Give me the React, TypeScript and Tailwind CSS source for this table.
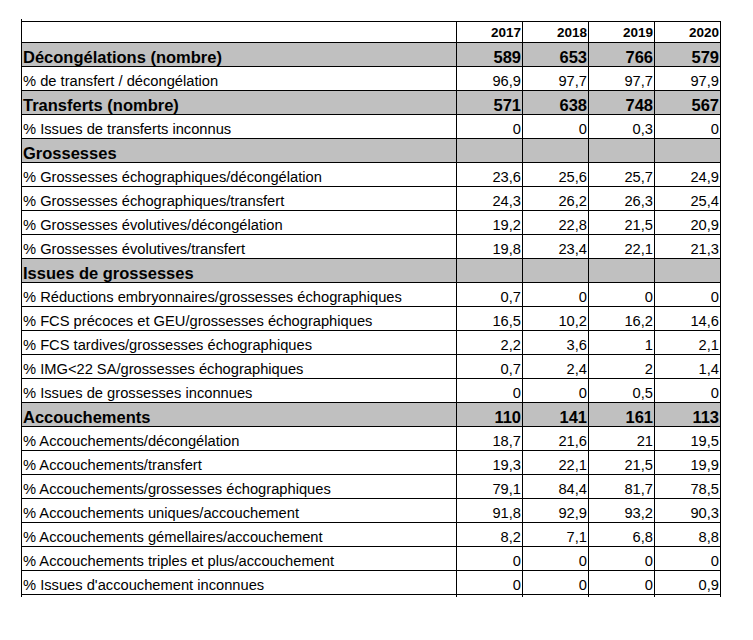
import React from "react";

type Row = { label: string; values: string[]; kind: "group" | "pct" };

const rows: Row[] = [
  { label: "Décongélations (nombre)", values: ["589", "653", "766", "579"], kind: "group" },
  { label: "% de transfert / décongélation", values: ["96,9", "97,7", "97,7", "97,9"], kind: "pct" },
  { label: "Transferts (nombre)", values: ["571", "638", "748", "567"], kind: "group" },
  { label: "% Issues de transferts inconnus", values: ["0", "0", "0,3", "0"], kind: "pct" },
  { label: "Grossesses", values: ["", "", "", ""], kind: "group" },
  { label: "% Grossesses échographiques/décongélation", values: ["23,6", "25,6", "25,7", "24,9"], kind: "pct" },
  { label: "% Grossesses échographiques/transfert", values: ["24,3", "26,2", "26,3", "25,4"], kind: "pct" },
  { label: "% Grossesses évolutives/décongélation", values: ["19,2", "22,8", "21,5", "20,9"], kind: "pct" },
  { label: "% Grossesses évolutives/transfert", values: ["19,8", "23,4", "22,1", "21,3"], kind: "pct" },
  { label: "Issues de grossesses", values: ["", "", "", ""], kind: "group" },
  { label: "% Réductions embryonnaires/grossesses échographiques", values: ["0,7", "0", "0", "0"], kind: "pct" },
  { label: "% FCS précoces et GEU/grossesses échographiques", values: ["16,5", "10,2", "16,2", "14,6"], kind: "pct" },
  { label: "% FCS tardives/grossesses échographiques", values: ["2,2", "3,6", "1", "2,1"], kind: "pct" },
  { label: "% IMG<22 SA/grossesses échographiques", values: ["0,7", "2,4", "2", "1,4"], kind: "pct" },
  { label: "% Issues de grossesses inconnues", values: ["0", "0", "0,5", "0"], kind: "pct" },
  { label: "Accouchements", values: ["110", "141", "161", "113"], kind: "group" },
  { label: "% Accouchements/décongélation", values: ["18,7", "21,6", "21", "19,5"], kind: "pct" },
  { label: "% Accouchements/transfert", values: ["19,3", "22,1", "21,5", "19,9"], kind: "pct" },
  { label: "% Accouchements/grossesses échographiques", values: ["79,1", "84,4", "81,7", "78,5"], kind: "pct" },
  { label: "% Accouchements uniques/accouchement", values: ["91,8", "92,9", "93,2", "90,3"], kind: "pct" },
  { label: "% Accouchements gémellaires/accouchement", values: ["8,2", "7,1", "6,8", "8,8"], kind: "pct" },
  { label: "% Accouchements triples et plus/accouchement", values: ["0", "0", "0", "0"], kind: "pct" },
  { label: "% Issues d'accouchement inconnues", values: ["0", "0", "0", "0,9"], kind: "pct" },
];

const years = ["2017", "2018", "2019", "2020"];
const cols = "grid grid-cols-[435px_66px_66px_66px_66px]";

export default function App() {
  return (
    <div
      className="min-h-[640px] w-[753px] bg-white text-black"
      style={{ fontFamily: '"Liberation Sans", Arial, sans-serif' }}
    >
      <div className="pt-[19px] pl-[21px]">
        {/* top-left tick */}
        <div className="h-[2px] w-[1px] bg-black" />
        <div className="w-[700px] border-t border-l border-black">
          {/* header row */}
          <div className={cols}>
            <div className="h-[21px] border-r border-b border-black" />
            {years.map((y) => (
              <div
                key={y}
                className="flex h-[21px] items-end justify-end border-r border-b border-black pr-[1px] pb-[3px] text-[13.5px] font-bold leading-none"
              >
                {y}
              </div>
            ))}
          </div>
          {rows.map((r, i) => {
            const g = r.kind === "group";
            return (
              <div key={i} className={`${cols} ${g ? "bg-[#c0c0c0]" : "bg-white"}`}>
                <div
                  className={`flex h-[24px] items-end border-r border-b border-black pl-[1px] leading-none whitespace-nowrap ${
                    g ? "pb-[1px] text-[16.5px] font-bold" : "pb-[1.5px] text-[14.7px]"
                  }`}
                >
                  {r.label}
                </div>
                {r.values.map((v, j) => (
                  <div
                    key={j}
                    className={`flex h-[24px] items-end justify-end border-r border-b border-black pr-[1px] leading-none ${
                      g ? "pb-[1px] text-[16.5px] font-bold" : "pb-[1.5px] text-[14.7px]"
                    }`}
                  >
                    {v}
                  </div>
                ))}
              </div>
            );
          })}
        </div>
        {/* bottom ticks */}
        <div className={`${cols} w-[700px] border-l border-black`}>
          {[0, 1, 2, 3, 4].map((k) => (
            <div key={k} className="h-[2px] border-r border-black" />
          ))}
        </div>
      </div>
    </div>
  );
}
